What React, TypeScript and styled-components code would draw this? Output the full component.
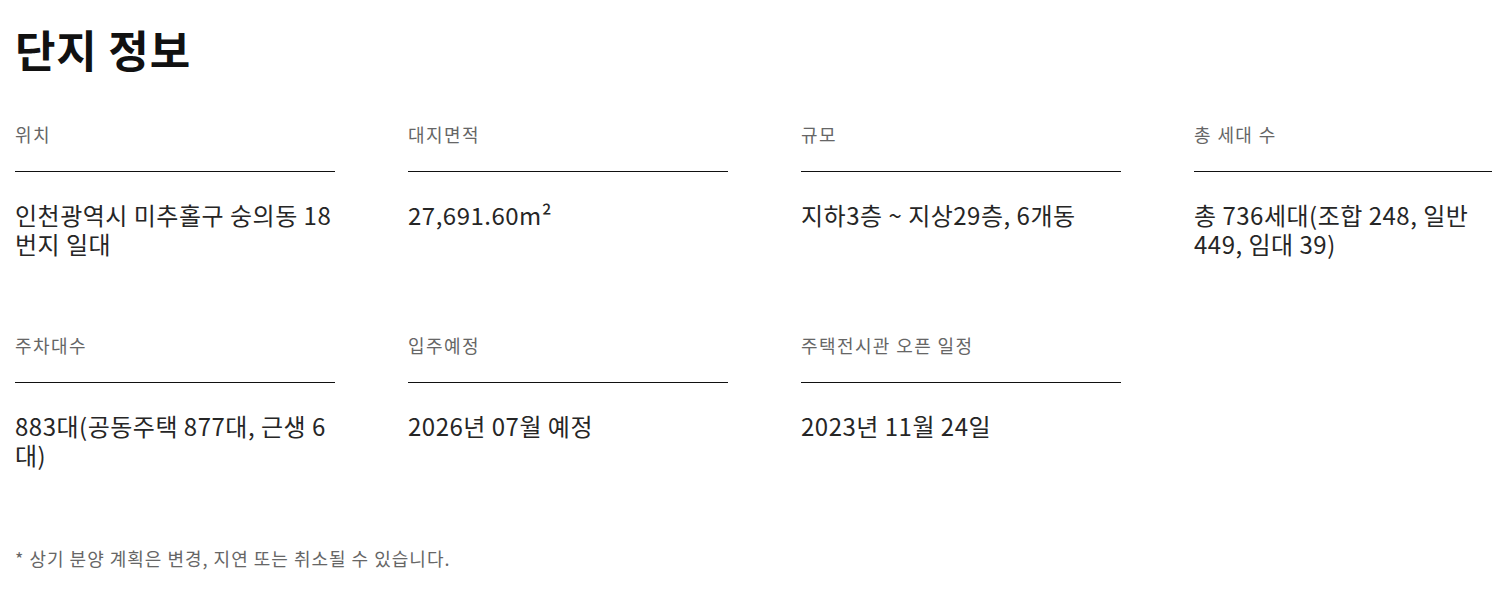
import React from "react";
import styled, { createGlobalStyle } from "styled-components";

const Global = createGlobalStyle`
  html, body { margin: 0; padding: 0; background: #fff; }
  body { font-family: "Noto Sans CJK KR", "Noto Sans CJK JP", sans-serif; color: #222; }
`;

const Page = styled.div`
  padding: 19px 0 0 15px;
`;

const Title = styled.h2`
  margin: 0;
  font-size: 44px;
  line-height: 60px;
  font-weight: 700;
  letter-spacing: 0.8px;
  color: #111;
`;

const Grid = styled.dl`
  margin: 42px 0 0;
  display: grid;
  grid-template-columns: repeat(3, 320px) 1fr;
  column-gap: 73px;
  row-gap: 74px;
`;

const Item = styled.div`
  display: flex;
  flex-direction: column;
  min-width: 0;
`;

const Label = styled.dt`
  font-size: 18px;
  line-height: 27px;
  letter-spacing: 1.4px;
  color: #666;
  padding-bottom: 23px;
  border-bottom: 1px solid #111;
`;

const Value = styled.dd`
  margin: 28px 0 0;
  font-size: 24px;
  line-height: 29px;
  letter-spacing: 0.5px;
  color: #262626;
  font-weight: 400;
`;

const Note = styled.p`
  margin: 76px 0 0;
  font-size: 18px;
  line-height: 27px;
  letter-spacing: 1px;
  color: #666;
`;

const items = [
  ["위치", "인천광역시 미추홀구 숭의동 18번지 일대"],
  ["대지면적", "27,691.60m²"],
  ["규모", "지하3층 ~ 지상29층, 6개동"],
  ["총 세대 수", "총 736세대(조합 248, 일반 449, 임대 39)"],
  ["주차대수", "883대(공동주택 877대, 근생 6대)"],
  ["입주예정", "2026년 07월 예정"],
  ["주택전시관 오픈 일정", "2023년 11월 24일"],
];

export default function App() {
  return (
    <Page>
      <Global />
      <Title>단지 정보</Title>
      <Grid>
        {items.map(([l, v]) => (
          <Item key={l}>
            <Label>{l}</Label>
            <Value>{v}</Value>
          </Item>
        ))}
      </Grid>
      <Note>* 상기 분양 계획은 변경, 지연 또는 취소될 수 있습니다.</Note>
    </Page>
  );
}
